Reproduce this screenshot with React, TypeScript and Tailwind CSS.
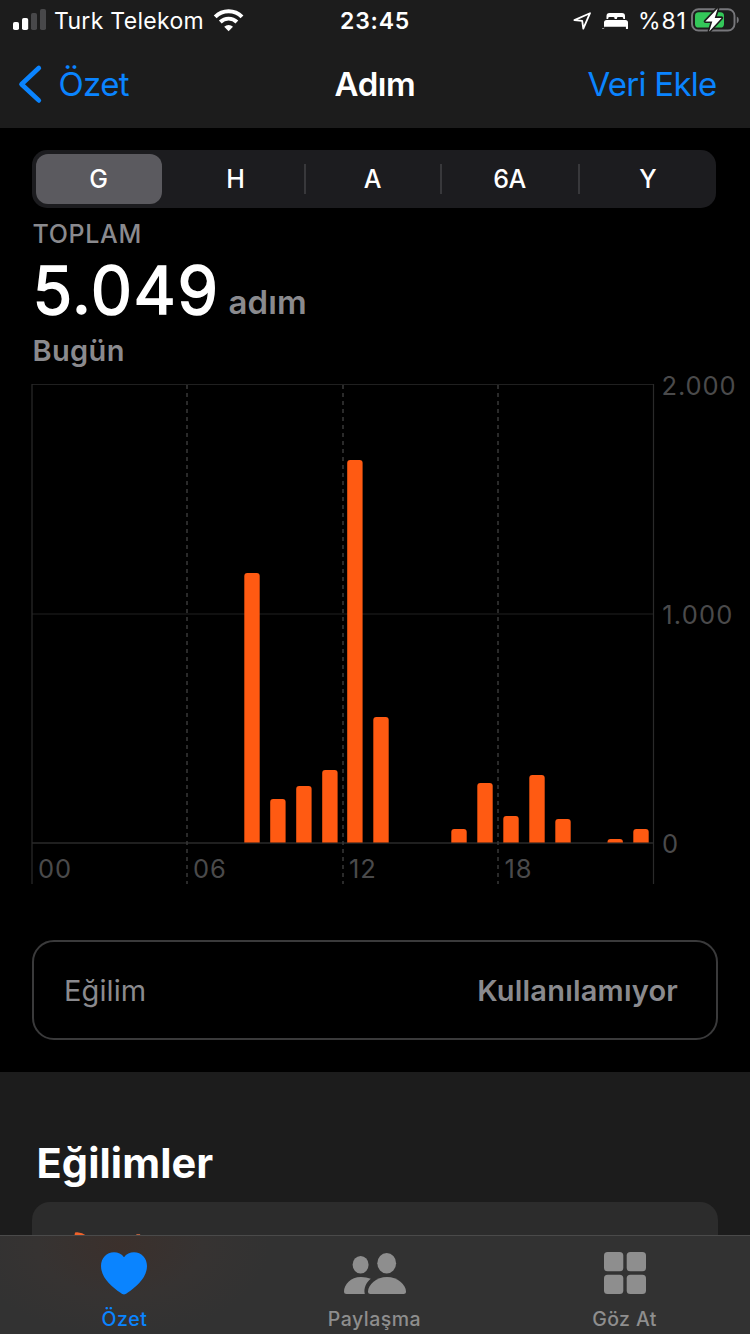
type Bar = { x: number; top: number };

const BASELINE = 842.5;

const bars: Bar[] = [
  { x: 244.3, top: 573 },
  { x: 270.2, top: 799 },
  { x: 296.2, top: 786 },
  { x: 322.2, top: 770 },
  { x: 347.2, top: 460 },
  { x: 373.3, top: 717 },
  { x: 451.3, top: 829 },
  { x: 477.3, top: 783 },
  { x: 503.3, top: 816 },
  { x: 529.3, top: 775 },
  { x: 555.3, top: 819 },
  { x: 607.5, top: 839 },
  { x: 633.3, top: 829 },
];

function barPath({ x, top }: Bar) {
  const r = 3;
  const w = 15.4;
  return `M${x} ${BASELINE}V${top + r}q0 -${r} ${r} -${r}H${x + w - r}q${r} 0 ${r} ${r}V${BASELINE}Z`;
}

function StatusBar() {
  return (
    <div className="flex h-[41px] items-center text-[23px] leading-none text-white">
      <svg className="ml-[13px] shrink-0" width="34" height="41" viewBox="13 0 34 41">
        <rect x="13" y="22" width="6" height="8" rx="1.8" fill="#fff" />
        <rect x="22" y="18" width="6.2" height="12" rx="1.8" fill="#fff" />
        <rect x="31" y="13" width="6" height="17" rx="1.8" fill="#48484a" />
        <rect x="40" y="9" width="6" height="21" rx="1.8" fill="#48484a" />
      </svg>
      <span className="ml-[7px] w-[157px] whitespace-nowrap pt-[2px] tracking-[0.3px]">Turk Telekom</span>
      <svg className="ml-[2px] shrink-0" width="32" height="41" viewBox="213 0 32 41" fill="none" stroke="#fff">
        <path d="M215.2 16.9A18.7 18.7 0 0 1 242 16.9" strokeWidth="4" />
        <path d="M220.3 22A11.8 11.8 0 0 1 236.9 22" strokeWidth="3.9" />
        <path d="M228.6 31.2L224.2 26.7A6.4 6.4 0 0 1 233 26.7Z" fill="#fff" stroke="none" />
      </svg>
      <span className="ml-[95px] w-[72px] whitespace-nowrap pt-[2px] font-semibold tracking-[0.8px]">23:45</span>
      <svg className="ml-[160px] shrink-0" width="58" height="41" viewBox="572 0 58 41">
        <path d="M574.4 20.1L590 13.2L583.3 28.6L582.2 20.9Z" fill="none" stroke="#fff" strokeWidth="1.8" strokeLinejoin="round" />
        <path d="M606.5 19V16q0-3 3-3h12.5q3 0 3 3V19h-1.7v-.6q0-1.4-1.4-1.4h-3.6q-1.4 0-1.4 1.4V19h-2.3v-.6q0-1.4-1.4-1.4h-3.6q-1.4 0-1.4 1.4V19Z" fill="#fff" />
        <path d="M604 28.5V22.5q0-2.6 2.6-2.6h18.800q2.6 0 2.6 2.6V28.5q0 .6-.6.6h-.9q-.6 0-.6-.6V26.8h-21.800V28.5q0 .6-.6.6h-.9q-.6 0-.6-.6Z" fill="#fff" />
      </svg>
      <span className="ml-[8px] w-[52px] whitespace-nowrap pt-[2px] tracking-[0.9px]">%81</span>
      <svg className="shrink-0" width="50" height="41" viewBox="690 0 50 41">
        <rect x="692" y="9.2" width="42.5" height="21.3" rx="6.5" fill="none" stroke="#77777b" strokeWidth="1.9" />
        <rect x="695" y="12.2" width="29" height="15.4" rx="3.6" fill="#34c759" />
        <path d="M736.8 16.6q2 1 2 3.4t-2 3.4Z" fill="#77777b" />
        <path d="M717.8 8.2L705.3 21.4H712.3L709.2 31.4L721.6 17.9H714.7Z" fill="#fff" stroke="#1c1c1c" strokeWidth="3.2" strokeLinejoin="round" paintOrder="stroke" />
      </svg>
    </div>
  );
}

function NavBar() {
  return (
    <div className="grid h-[87px] grid-cols-3 items-center pb-px text-[33px] leading-none text-[#0a84ff]">
      <div className="flex items-center">
        <svg className="ml-[18px]" width="26" height="42" viewBox="18 63 26 42" fill="none" stroke="#0a84ff" strokeWidth="4.7" strokeLinecap="round" strokeLinejoin="round">
          <path d="M38.8 68L21.5 84.2L38.8 100.4" />
        </svg>
        <span className="ml-[14.5px] tracking-[-0.65px]">Özet</span>
      </div>
      <span className="text-center font-semibold tracking-[-0.4px] text-white">Adım</span>
      <span className="pr-[33.5px] text-right tracking-[-0.75px]">Veri Ekle</span>
    </div>
  );
}

function Segments() {
  return (
    <div className="mx-[32px] mt-[22px] flex h-[58px] w-[684px] items-center rounded-[15px] bg-[#1c1c1f] text-[25px] font-medium leading-none text-white">
      <div className="ml-[4px] flex h-[50px] w-[126px] items-center justify-center rounded-[12px] bg-[#5b5a5f] pr-px">G</div>
      <div className="ml-[6px] flex h-[30px] w-[138px] items-center justify-center border-r-2 border-[#38383b] pr-px">H</div>
      <div className="flex h-[30px] w-[136px] items-center justify-center border-r-2 border-[#38383b] pr-px">A</div>
      <div className="flex h-[30px] w-[138px] items-center justify-center border-r-2 border-[#38383b] pr-px tracking-[-0.4px]">6A</div>
      <div className="flex h-[30px] w-[136px] items-center justify-center">Y</div>
    </div>
  );
}

function Summary() {
  return (
    <div className="pl-[32.5px] text-[#8a8a8e]">
      <div className="h-[51px] pt-px text-[25px] font-medium leading-[51px] tracking-[0.65px]">TOPLAM</div>
      <div className="flex h-[64px] items-baseline">
        <span className="w-[196px] text-[65.5px] leading-[64px] tracking-[1.5px] text-white [-webkit-text-stroke:1.5px_white]">5.049</span>
        <span className="text-[33px] font-semibold leading-none tracking-[0.1px]">adım</span>
      </div>
      <div className="h-[55px] text-[29px] font-semibold leading-[55px] tracking-[0.35px]">Bugün</div>
    </div>
  );
}

function Chart() {
  return (
    <svg className="block overflow-visible" width="750" height="512" viewBox="0 378 750 512">
      <g stroke="#2a2a2a">
        <path d="M32 384.5H654M32 614H654" strokeWidth="1" stroke="#202020" />
        <path d="M32 843H654" strokeWidth="1.6" />
        <path d="M32 384V884M653.5 384V884" strokeWidth="1.2" />
      </g>
      <g stroke="#353535" strokeWidth="1.6" strokeDasharray="4 4">
        <path d="M187 385V884" />
        <path d="M343 385V884" />
        <path d="M498 385V884" />
      </g>
      <g fill="#ff5a12">
        {bars.map((b) => (
          <path key={b.x} d={barPath(b)} />
        ))}
      </g>
      <g fill="#4a4a4b" fontSize="25.5" letterSpacing="0.9">
        <text x="661.5" y="395">2.000</text>
        <text x="662.2" y="624" letterSpacing="1.2">1.000</text>
        <text x="662" y="853">0</text>
        <text x="38" y="878">00</text>
        <text x="193" y="878">06</text>
        <text x="349" y="878">12</text>
        <text x="504.5" y="878">18</text>
      </g>
    </svg>
  );
}

function TrendRow() {
  return (
    <div className="mx-[32px] mt-[50px] flex h-[100px] items-center justify-between rounded-[22px] border-2 border-[#3a3a3b] pl-[30px] pr-[38px] text-[29px] leading-none text-[#8a8a8e]">
      <span className="tracking-[0.1px]">Eğilim</span>
      <span className="font-semibold tracking-[0.2px]">Kullanılamıyor</span>
    </div>
  );
}

function TrendsSection() {
  return (
    <div className="mt-[32px] h-[262px] bg-[#1c1c1c] px-[32px] pt-[52px]">
      <h2 className="pl-[4.5px] text-[41.5px] font-bold leading-[78px] tracking-[0.1px] text-white">Eğilimler</h2>
      <div className="h-[132px] rounded-t-[18px] bg-[#2c2c2c] pt-[30px]">
        <svg className="block" width="200" height="6" viewBox="32 1232 200 6">
          <path d="M74 1238L75 1232.5Q81 1231.5 87 1236V1238Z" fill="#f0622a" />
          <path d="M135.5 1238L136.5 1234H140L141 1238Z" fill="#b0603f" />
        </svg>
      </div>
    </div>
  );
}

function TabBar() {
  return (
    <div className="absolute bottom-0 left-0 grid h-[99px] w-[750px] grid-cols-3 border-t border-[#4a4a4a] bg-[#323232] bg-[radial-gradient(ellipse_150px_90px_at_120px_10px,#3b302c_0%,#363332_55%,#323232_100%)] text-[19.5px] font-medium leading-none text-[#8e8e8e]">
      <div className="flex flex-col items-center pt-[16px] text-[#0a84ff]">
        <svg className="mr-[3px]" width="46" height="43" viewBox="0 0 46 43" fill="#0a84ff">
          <path d="M23 5.3C25.3 2.1 29 .3 33 .3C40.5 .3 46 6.3 46 14C46 25.5 35.500 34.800 26.500 40.800C25.200 41.700 24 42.500 23 42.500C22 42.500 20.800 41.700 19.500 40.800C10.500 34.800 0 25.500 0 14C0 6.300 5.500 .3 13 .3C17 .3 20.700 2.100 23 5.300Z" />
        </svg>
        <span className="mr-[1px] mt-[15px] tracking-[0.6px]">Özet</span>
      </div>
      <div className="flex flex-col items-center pt-[16px]">
        <svg width="62" height="43" viewBox="344 1252 62 43" fill="#8e8e8e">
          <ellipse cx="360.6" cy="1264.7" rx="8" ry="8.8" />
          <ellipse cx="386.7" cy="1263.2" rx="9.4" ry="10.2" />
          <path d="M370.8 1278.8Q366.5 1277 361 1277C350.5 1277 344 1285 344 1291.5Q344 1294 346.5 1294H364.8C363.5 1288.5 366 1282.5 370.8 1278.8Z" />
          <path d="M387 1277C397.5 1277 406 1285 406 1291.5Q406 1294 403.5 1294H370.5Q368 1294 368 1291.5C368 1285 376.5 1277 387 1277Z" />
        </svg>
        <span className="mr-[1px] mt-[15px] tracking-[0.5px]">Paylaşma</span>
      </div>
      <div className="flex flex-col items-center pt-[16px]">
        <svg width="42" height="43" viewBox="0 0 42 43" fill="#8e8e8e">
          <rect x="0" y="0" width="19.3" height="19.3" rx="3.6" />
          <rect x="22.7" y="0" width="19.3" height="19.3" rx="3.6" />
          <rect x="0" y="22.8" width="19.3" height="19.3" rx="3.6" />
          <rect x="22.7" y="22.8" width="19.3" height="19.3" rx="3.6" />
        </svg>
        <span className="mr-[1px] mt-[15px] tracking-[0.4px]">Göz At</span>
      </div>
    </div>
  );
}

export default function App() {
  return (
    <div className="relative h-[1334px] w-[750px] overflow-hidden bg-black font-[Inter,'Liberation_Sans',sans-serif]">
      <div className="bg-[#1c1c1c]">
        <StatusBar />
        <NavBar />
      </div>
      <Segments />
      <Summary />
      <Chart />
      <TrendRow />
      <TrendsSection />
      <TabBar />
    </div>
  );
}
